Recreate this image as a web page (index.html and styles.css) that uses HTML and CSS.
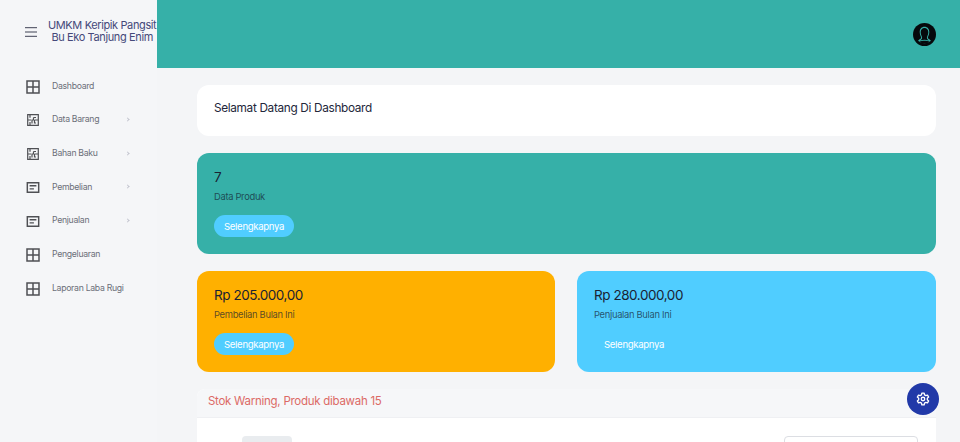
FILE: index.html
```html
<!DOCTYPE html>
<html lang="id">
<head>
<meta charset="utf-8">
<title>Dashboard</title>
<link rel="stylesheet" href="styles.css">
</head>
<body>
<svg class="defs" width="0" height="0" aria-hidden="true">
  <symbol id="i-grid" viewBox="0 0 14 14"><path d="M1 1h12v12H1zM7 1v12M1 7h12" fill="none" stroke="currentColor" stroke-width="1.5"/></symbol>
  <symbol id="i-plan" viewBox="0 0 12 12"><path d="M.7.7h10.600v10.600H.7zM3 .7v3M.7 6H4M6.500 3.500H9M6.500 3.500V6H5v3.500M3 8v3.300M7.500 6H11M7.500 6v3H9" fill="none" stroke="currentColor" stroke-width="1.200"/></symbol>
  <symbol id="i-list" viewBox="0 0 14 12"><path d="M.8.8h12.400v10.400H.8zM3.300 4h7.400M3.300 7.500h4.700" fill="none" stroke="currentColor" stroke-width="1.600"/></symbol>
</svg>
<div class="app">
  <aside class="sidebar">
    <div class="brand">
      <svg class="burger" width="12" height="10" viewBox="0 0 12 10"><path d="M0 .7h12M0 5h12M0 9.300h12" stroke="#3f4254" stroke-width="1"/></svg>
      <div class="brand-name">UMKM Keripik Pangsit<br>Bu Eko Tanjung Enim</div>
    </div>
    <nav class="menu">
      <a class="item"><svg class="ic"><use href="#i-grid"/></svg><span>Dashboard</span></a>
      <a class="item"><svg class="ic ic-s"><use href="#i-plan"/></svg><span>Data Barang</span><i class="chev"></i></a>
      <a class="item"><svg class="ic ic-s"><use href="#i-plan"/></svg><span>Bahan Baku</span><i class="chev"></i></a>
      <a class="item"><svg class="ic ic-l"><use href="#i-list"/></svg><span>Pembelian</span><i class="chev"></i></a>
      <a class="item"><svg class="ic ic-l"><use href="#i-list"/></svg><span>Penjualan</span><i class="chev"></i></a>
      <a class="item"><svg class="ic"><use href="#i-grid"/></svg><span>Pengeluaran</span></a>
      <a class="item"><svg class="ic"><use href="#i-grid"/></svg><span>Laporan Laba Rugi</span></a>
    </nav>
  </aside>
  <div class="main">
    <header class="topbar">
      <svg class="avatar" width="23" height="23" viewBox="0 0 24 24"><circle cx="12" cy="12" r="12" fill="#06090c"/><path d="M12 4c-3 0-5 2.200-5 5.500 0 3 1.500 4.500 1.500 6 0 1-2 1.700-3.200 3 1.800 1.700 4 2.500 6.700 2.500s4.900-.8 6.700-2.500c-1.200-1.300-3.200-2-3.200-3 0-1.500 1.500-3 1.500-6C17 6.200 15 4 12 4z" fill="#36b0a8"/><path d="M12 5.200c-2.400 0-4 1.800-4 4.400 0 2.600 1.500 4.200 1.500 5.900 0 1.200-1 2-2 2.700 1.300-.4 2.900-.7 4.500-.7s3.200.3 4.500.7c-1-.7-2-1.500-2-2.700 0-1.700 1.500-3.300 1.500-5.900 0-2.600-1.600-4.400-4-4.400zM6.500 19.500c1.500 1.300 3.300 1.800 5.500 1.800s4-.5 5.500-1.800c-1.500-.7-3.500-1-5.500-1s-4 .3-5.500 1z" fill="#06090c"/></svg>
    </header>
    <main class="content">
      <section class="welcome">Selamat Datang Di Dashboard</section>
      <section class="stat stat-teal">
        <div class="value">7</div>
        <div class="label">Data Produk</div>
        <a class="more more-fill">Selengkapnya</a>
      </section>
      <div class="row">
        <section class="stat stat-amber">
          <div class="value">Rp 205.000,00</div>
          <div class="label">Pembelian Bulan Ini</div>
          <a class="more more-fill">Selengkapnya</a>
        </section>
        <section class="stat stat-sky">
          <div class="value">Rp 280.000,00</div>
          <div class="label">Penjualan Bulan Ini</div>
          <a class="more">Selengkapnya</a>
        </section>
      </div>
      <section class="panel">
        <div class="panel-head">Stok Warning, Produk dibawah 15</div>
        <div class="panel-body">
          <div class="length"></div>
          <div class="search"></div>
        </div>
      </section>
    </main>
  </div>
</div>
<button class="settings" aria-label="Pengaturan">
  <svg width="14" height="14" viewBox="0 0 24 24" fill="none" stroke="#fff" stroke-width="2.300" stroke-linejoin="round"><circle cx="12" cy="12" r="3"/><path d="M10 2h4l.6 3 2.200 1.300 2.900-1 2 3.400-2.300 2 0 2.600 2.300 2-2 3.400-2.900-1-2.200 1.300-.6 3h-4l-.6-3-2.200-1.300-2.900 1-2-3.400 2.300-2 0-2.600-2.300-2 2-3.400 2.900 1L9.400 5z"/></svg>
</button>
</body>
</html>
```

FILE: styles.css
```css
* { box-sizing: border-box; }
html, body { height: 100%; }
body {
  margin: 0;
  overflow: hidden;
  background: #f4f5f7;
  font-family: Inter, "Noto Sans", "Liberation Sans", sans-serif;
  color: #181c32;
}
.defs { position: absolute; }
.app { display: flex; height: 442px; overflow: hidden; }

.sidebar { flex: 0 0 157px; width: 157px; min-width: 0; background: #f5f6f8; }
.brand {
  height: 68px;
  display: flex;
  align-items: center;
  padding-left: 25px;
  gap: 11px;
  white-space: nowrap;
}
.burger { flex: none; margin-top: -4px; }
.brand-name {
  font-size: 11px;
  line-height: 12px;
  color: #45497a;
  text-align: center;
  letter-spacing: -.38px;
  margin-top: -6px;
}
.menu { display: flex; flex-direction: column; margin-top: 1px; }
.item {
  position: relative;
  display: flex;
  align-items: center;
  height: 33.650px;
  font-size: 8.700px;
  color: #6c6f78;
  letter-spacing: -.3px;
}
.ic { width: 14px; height: 14px; margin: 2px 12.500px 0 25.500px; color: #4f5054; flex: none; }
.ic-s { width: 12px; height: 12px; margin: 2px 13px 0 27px; }
.ic-l { height: 11px; }
.chev {
  position: absolute;
  left: 126px;
  width: 3px;
  height: 3px;
  border-top: 1px solid #c4c5cf;
  border-right: 1px solid #c4c5cf;
  transform: rotate(45deg);
}

.main { flex: 1; min-width: 0; display: flex; flex-direction: column; }
.topbar {
  flex: 0 0 68px;
  background: #36b0a8;
  display: flex;
  align-items: center;
  justify-content: flex-end;
  padding-right: 24px;
}
.content {
  padding: 17px 24px 0 40px;
  display: flex;
  flex-direction: column;
  gap: 17px;
}
.welcome {
  height: 51px;
  background: #fff;
  border-radius: 12px;
  padding: 0 17px 5px;
  display: flex;
  align-items: center;
  font-size: 11.800px;
  font-weight: 400;
  color: #23263a;
  letter-spacing: -.33px;
}
.stat {
  height: 101px;
  border-radius: 12px;
  padding: 14px 17px 0;
  display: flex;
  flex-direction: column;
  align-items: flex-start;
}
.stat-teal { background: #36b0a8; }
.stat-amber { background: #ffb000; }
.stat-sky { background: #50cdff; }
.value { font-size: 13.500px; line-height: 20px; color: #1a2233; letter-spacing: -.45px; }
.label { font-size: 9.400px; line-height: 14px; margin-top: 3px; color: rgba(20, 30, 50, .72); letter-spacing: -.32px; }
.more {
  margin-top: 11px;
  height: 22px;
  padding: 0 10px;
  width: 80px;
  border-radius: 11px;
  display: flex;
  align-items: center;
  font-size: 9.600px;
  color: #fff;
  letter-spacing: -.32px;
  white-space: nowrap;
}
.more-fill { background: #50cdff; }
.row { display: flex; gap: 22px; }
.row .stat { flex: 1; }
.row .stat-amber { flex: 0 0 358px; }
.panel { background: #fff; border-radius: 8px 8px 0 0; }
.panel-head {
  height: 29px;
  background: #f6f7f9;
  border-bottom: 1px solid #eff0f3;
  border-radius: 8px 0 0 0;
  padding: 0 0 4px 11px;
  display: flex;
  align-items: center;
  font-size: 11.500px;
  color: #dc6a66;
  letter-spacing: -.27px;
}
.panel-body {
  display: flex;
  justify-content: space-between;
  padding: 18px 18px 0 45px;
  height: 60px;
}
.length { width: 50px; height: 40px; background: #e9ecef; border-radius: 4px; }
.search { width: 134px; height: 40px; background: #fff; border: 1px solid #dcdee3; border-radius: 4px; }
.settings {
  position: fixed;
  left: 907px;
  top: 383px;
  width: 32px;
  height: 32px;
  padding: 0;
  border: 0;
  border-radius: 50%;
  background: #2139a8;
  display: flex;
  align-items: center;
  justify-content: center;
}
```
